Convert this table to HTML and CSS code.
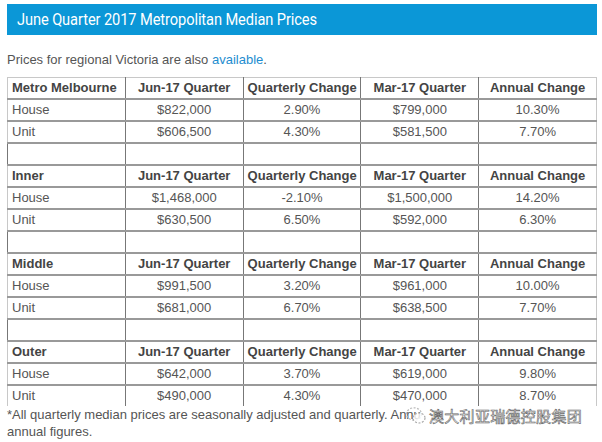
FILE: index.html
```html
<!DOCTYPE html>
<html>
<head>
<meta charset="utf-8">
<link rel="stylesheet" href="styles.css">
</head>
<body>
<div class="page">
  <h1 class="title"><span class="title-text">June Quarter 2017 Metropolitan Median Prices</span></h1>
  <p class="intro">Prices for regional Victoria are also <a class="link" href="#">available</a>.</p>
  <table class="prices">
    <tr class="head"><th class="name">Metro Melbourne</th><th>Jun-17 Quarter</th><th>Quarterly Change</th><th>Mar-17 Quarter</th><th>Annual Change</th></tr>
    <tr><td class="name">House</td><td>$822,000</td><td>2.90%</td><td>$799,000</td><td>10.30%</td></tr>
    <tr><td class="name">Unit</td><td>$606,500</td><td>4.30%</td><td>$581,500</td><td>7.70%</td></tr>
    <tr class="blank"><td></td><td></td><td></td><td></td><td></td></tr>
    <tr class="head"><th class="name">Inner</th><th>Jun-17 Quarter</th><th>Quarterly Change</th><th>Mar-17 Quarter</th><th>Annual Change</th></tr>
    <tr><td class="name">House</td><td>$1,468,000</td><td>-2.10%</td><td>$1,500,000</td><td>14.20%</td></tr>
    <tr><td class="name">Unit</td><td>$630,500</td><td>6.50%</td><td>$592,000</td><td>6.30%</td></tr>
    <tr class="blank"><td></td><td></td><td></td><td></td><td></td></tr>
    <tr class="head"><th class="name">Middle</th><th>Jun-17 Quarter</th><th>Quarterly Change</th><th>Mar-17 Quarter</th><th>Annual Change</th></tr>
    <tr><td class="name">House</td><td>$991,500</td><td>3.20%</td><td>$961,000</td><td>10.00%</td></tr>
    <tr><td class="name">Unit</td><td>$681,000</td><td>6.70%</td><td>$638,500</td><td>7.70%</td></tr>
    <tr class="blank"><td></td><td></td><td></td><td></td><td></td></tr>
    <tr class="head"><th class="name">Outer</th><th>Jun-17 Quarter</th><th>Quarterly Change</th><th>Mar-17 Quarter</th><th>Annual Change</th></tr>
    <tr><td class="name">House</td><td>$642,000</td><td>3.70%</td><td>$619,000</td><td>9.80%</td></tr>
    <tr><td class="name">Unit</td><td>$490,000</td><td>4.30%</td><td>$470,000</td><td>8.70%</td></tr>
  </table>
  <div class="foot">
    <p class="note">*All quarterly median prices are seasonally adjusted and quarterly. Annu<span class="hidden">al change is based on</span><br>annual figures.</p>
    <div class="mark">
      <svg class="mark-logo" width="22" height="20" viewBox="0 0 22 20">
        <ellipse cx="9" cy="8" rx="7.5" ry="6.2" fill="none" stroke="#bbb" stroke-width="1.2" stroke-dasharray="2 1.5"/>
        <ellipse cx="14" cy="12" rx="6" ry="5" fill="rgba(255,255,255,0.8)" stroke="#aaa" stroke-width="1.2" stroke-dasharray="2 1.5"/>
      </svg>
      <span class="mark-text">澳大利亚瑞德控股集团</span>
    </div>
  </div>
</div>
</body>
</html>
```
FILE: styles.css
```css
html, body {
  margin: 0;
  padding: 0;
  background: #fff;
}
.page {
  width: 590px;
  padding: 4px 0 0 7px;
  font-family: "Liberation Sans", Arial, sans-serif;
  color: #555;
}
.title {
  margin: 0;
  height: 31px;
  background: #0b97d7;
  color: #fff;
  font-family: Roboto, "Noto Sans", sans-serif;
  font-weight: 400;
  font-size: 17px;
  line-height: 31px;
  padding-left: 10px;
  white-space: nowrap;
}
.title-text {
  display: inline-block;
  transform: scaleX(0.86);
  transform-origin: left center;
  letter-spacing: -0.1px;
}
.intro {
  margin: 0;
  padding-top: 17px;
  height: 25px;
  font-size: 13px;
  line-height: 16px;
  color: #555;
}
.link {
  color: #1e8dd0;
  text-decoration: none;
}
.prices {
  width: 590px;
  table-layout: fixed;
  border-collapse: collapse;
  font-size: 13px;
  border-left: 1px solid #c8c8c8;
  border-right: 1px solid #c8c8c8;
  border-top: 1px solid #c8c8c8;
}
.prices th, .prices td {
  height: 20px;
  padding: 0 4px;
  text-align: center;
  border-left: 1px solid #777;
  border-top: 2px solid #999;
  line-height: 18px;
  white-space: nowrap;
}
.prices tr:first-child th {
  border-top: none;
  height: 20px;
}
.prices th {
  font-weight: 700;
  color: #444;
}
.prices td {
  color: #555;
}
.prices .name {
  text-align: left;
  border-left: none;
}
.foot {
  position: relative;
}
.note {
  margin: 0;
  font-size: 13px;
  line-height: 17px;
  color: #555;
}
.hidden {
  color: transparent;
}
.mark {
  position: absolute;
  left: 398px;
  top: -1px;
  display: flex;
  align-items: center;
  gap: 2px;
}
.mark-text {
  font-family: "Noto Sans CJK SC", sans-serif;
  font-size: 15px;
  color: #fff;
  -webkit-text-stroke: 0.6px #666;
  letter-spacing: 0.3px;
}
```
